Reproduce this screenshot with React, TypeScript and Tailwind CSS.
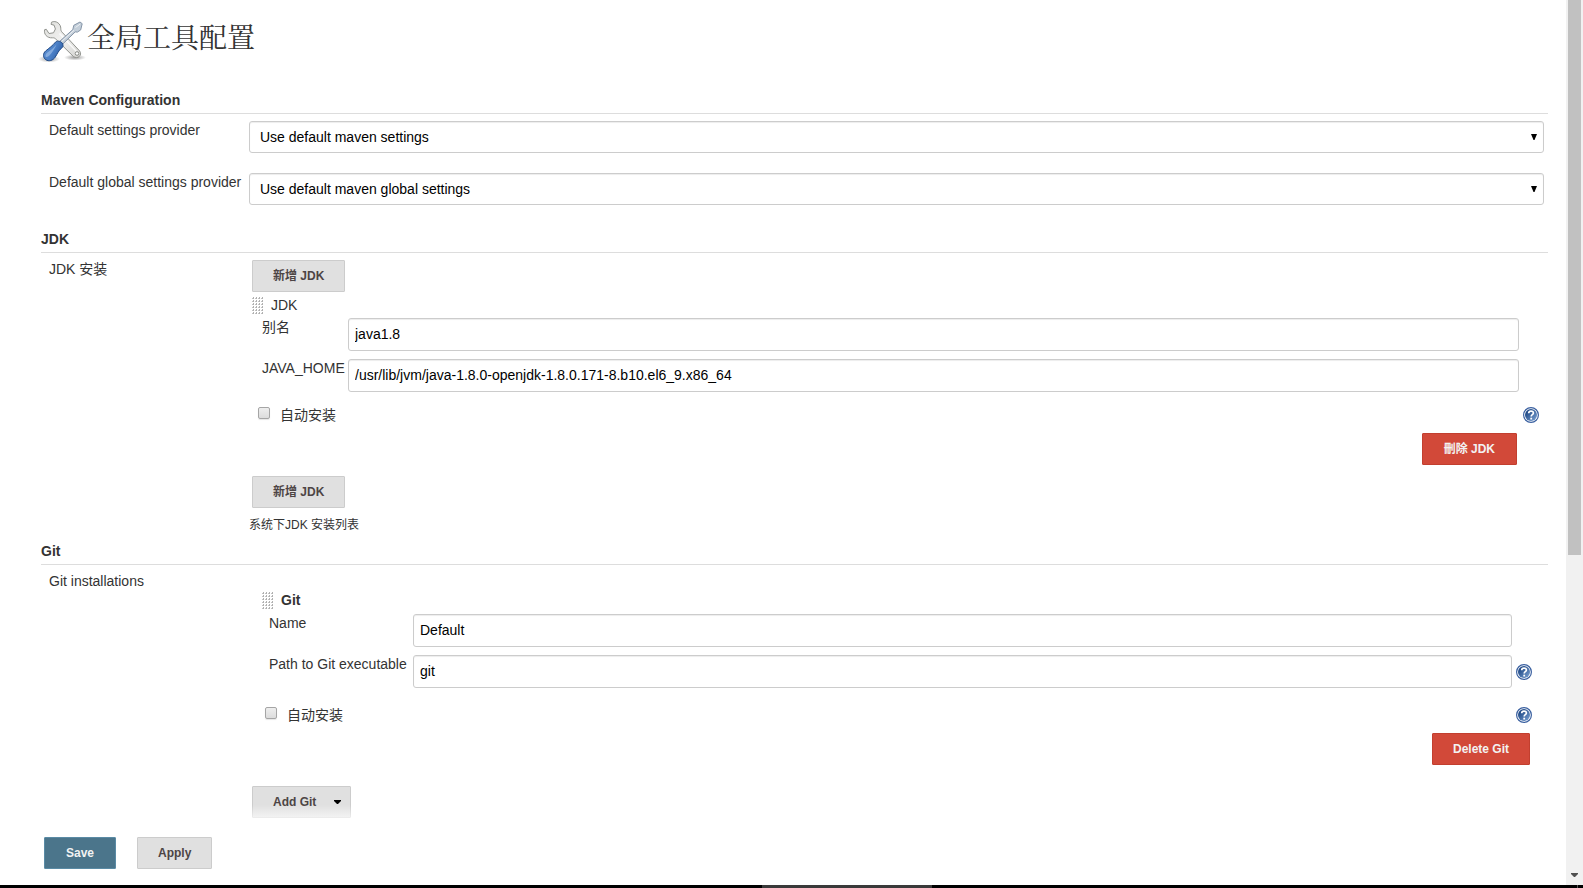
import React, { useState } from 'react';

const buttonBase = 'h-8 border rounded-[1px] text-xs font-bold whitespace-nowrap cursor-pointer';
const inputClass =
  'mt-px h-[33px] w-full min-w-0 rounded-[3px] border border-[#ccc] bg-white px-1.5 pb-0.5 text-sm text-black shadow-[inset_0_1px_1px_rgba(0,0,0,0.075)]';

const ToolsIcon: React.FC = () => (
  <svg className="w-12 h-12 shrink-0" viewBox="0 0 48 48" aria-hidden="true">
    <defs>
      <linearGradient id="steel" x1="0" y1="0" x2="1" y2="1">
        <stop offset="0" stopColor="#dcdcd9" />
        <stop offset="0.5" stopColor="#f2f2f1" />
        <stop offset="1" stopColor="#d3d3d0" />
      </linearGradient>
      <linearGradient id="handle" x1="0" y1="0.3" x2="1" y2="0.8">
        <stop offset="0" stopColor="#5d8fd0" />
        <stop offset="0.5" stopColor="#4a7fc6" />
        <stop offset="1" stopColor="#2a569a" />
      </linearGradient>
      <radialGradient id="shade">
        <stop offset="0" stopColor="#000" stopOpacity="0.4" />
        <stop offset="1" stopColor="#000" stopOpacity="0" />
      </radialGradient>
    </defs>
    <ellipse cx="11" cy="43" rx="11" ry="3.5" fill="url(#shade)" />
    <ellipse cx="37" cy="41.5" rx="11" ry="3" fill="url(#shade)" />
    <path
      d="M13.500 6.200C18 4 23 7.800 22.800 12.800c0 1.300.3 2.300 1.200 3.300l17.500 18.700c3.400 4.200-1.800 9-6.200 5.600L17.500 22.800c-1-.9-1.800-1.100-3-1C9 22.300 5.500 18 6.700 13.600l1.600-.3 2.700 4.200 4.500-.7 1.900-3.800-1.300-3.800-3-.8z"
      fill="url(#steel)"
      stroke="#92948f"
      strokeLinejoin="round"
    />
    <path d="M21.500 17.500l17 18" stroke="#fff" strokeWidth="1.500" opacity="0.8" />
    <circle cx="39" cy="37.500" r="1.800" fill="#fff" stroke="#888a85" />
    <path
      d="M21.500 25.500L34.800 13.600l1-4.300 6.200-3.300 2.200 1.700-1.500 6.200-3.300 2.200-2.200-.2L24.800 28z"
      fill="#c3ced9"
      stroke="#8595a8"
      strokeLinejoin="round"
    />
    <path d="M23.500 25.500l12.500-11.200M37.500 11.500l4.500-3.300" fill="none" stroke="#edf1f5" strokeWidth="1" />
    <path
      d="M17.800 25.800c2.300-1.500 5.800-.3 6.900 2.100.8 1.900.1 3.200-1.200 4.300-3 2.500-4.200 5.600-6.200 8.800-2.300 3.700-6.600 4.700-9.500 2.700-3-2.100-3.100-6.200-.2-8.700 3.500-2.800 7.100-5.400 10.200-9.200z"
      fill="url(#handle)"
      stroke="#204a87"
    />
    <path d="M18.500 28.500c-3 3.600-6.400 6-9.300 8.300-1.700 1.500-1.900 2.900-1.400 4.200 2.500.8 4.700-2.500 6.800-5.500 1.300-2 2.800-4.200 3.900-7z" fill="#a9c6ec" opacity="0.600" />
  </svg>
);

const HelpButton: React.FC<{ className?: string }> = ({ className = '' }) => (
  <button type="button" aria-label="Help" className={`block w-4 h-4 cursor-pointer ${className}`}>
    <svg viewBox="0 0 16 16" className="w-4 h-4">
      <defs>
        <linearGradient id="helpFill" x1="0" y1="0" x2="1" y2="1">
          <stop offset="0.2" stopColor="#204a87" />
          <stop offset="1" stopColor="#7fa5d6" />
        </linearGradient>
      </defs>
      <circle cx="8" cy="8" r="7.400" fill="#fff" stroke="#3a60a0" strokeWidth="1.200" />
      <circle cx="8" cy="8" r="6" fill="url(#helpFill)" />
      <path d="M5.700 6.300c0-3 4.700-2.900 4.700-.3 0 1.700-2.200 1.700-2.200 3.500" fill="none" stroke="#fff" strokeWidth="1.700" />
      <rect x="7.300" y="10.700" width="1.800" height="1.800" fill="#fff" />
    </svg>
  </button>
);

const Grip: React.FC = () => (
  <svg className="w-[11px] h-[17px] cursor-move" viewBox="0 0 11 17" aria-hidden="true">
    {[0, 3, 6, 9, 12, 15].map((y) =>
      [0, 3, 6, 9].map((x) => (
        <g key={`${x}-${y}`}>
          <rect x={x + 1} y={y} width="1" height="2" fill="#b0b0b0" />
          <rect x={x} y={y + 1} width="1" height="1" fill="#c4c4c4" />
        </g>
      ))
    )}
  </svg>
);

const Section: React.FC<{ title: string; children: React.ReactNode }> = ({ title, children }) => (
  <section className="ml-[3px]">
    <h2 className="border-b border-[#ddd] pb-[3px] font-bold">{title}</h2>
    <div className="pt-1.5 pr-1">{children}</div>
  </section>
);

const SettingsSelect: React.FC<{ id: string; label: string; option: string }> = ({ id, label, option }) => (
  <>
    <label htmlFor={id} className="pl-2 whitespace-nowrap">{label}</label>
    <div className="relative mt-px">
      <select
        id={id}
        className="block h-8 w-full appearance-none rounded-[3px] border border-[#ccc] bg-white px-2.5 text-sm text-black shadow-[inset_0_1px_1px_rgba(0,0,0,0.075)]"
      >
        <option>{option}</option>
      </select>
      <svg className="pointer-events-none absolute right-[7px] top-[13px] w-1.5 h-1.5" viewBox="0 0 6 6">
        <path d="M0 0h6L3.500 6h-1z" fill="#000" />
      </svg>
    </div>
  </>
);

const AutoInstall: React.FC<{ id: string }> = ({ id }) => {
  const [checked, setChecked] = useState(false);
  return (
    <div className="flex items-start">
      <input
        id={id}
        type="checkbox"
        checked={checked}
        onChange={(e) => setChecked(e.target.checked)}
        className="mt-0.5 mr-2.5 w-3 h-3 appearance-none rounded-[2px] border border-[#a5a5a5] bg-linear-to-b from-[#eee] to-[#dcdcdc] shadow-[0_1px_1px_rgba(0,0,0,0.1)] checked:bg-gray-600"
      />
      <label htmlFor={id} className="grow">自动安装</label>
      <HelpButton className="mt-0.5" />
    </div>
  );
};

const AddJdkButton: React.FC = () => (
  <button type="button" className={`${buttonBase} ml-[3px] block px-5 border-[#ccc] bg-[#e0e0e0] text-[#4d4545]`}>
    新增 JDK
  </button>
);

const App: React.FC = () => {
  return (
    <div className="flex h-screen flex-col overflow-hidden bg-white font-['Liberation_Sans','Noto_Sans_CJK_SC',sans-serif] text-sm leading-5 text-[#333]">
      <div className="flex min-h-0 grow">
        <div className="relative min-w-0 grow overflow-hidden">
          <main className="pt-4 pr-[18px] pl-[38px]">
            <header className="mb-[26px] flex h-12 gap-px">
              <ToolsIcon />
              <h1 className="font-['Liberation_Serif','Noto_Serif_CJK_SC','Noto_Sans_CJK_SC',serif] text-[28px] leading-[46px]">
                全局工具配置
              </h1>
            </header>

            <form id="config" onSubmit={(e) => e.preventDefault()}>
              <Section title="Maven Configuration">
                <div className="mb-6 grid grid-cols-[208px_1fr] gap-y-[19px]">
                  <SettingsSelect id="settings" label="Default settings provider" option="Use default maven settings" />
                  <SettingsSelect
                    id="globalSettings"
                    label="Default global settings provider"
                    option="Use default maven global settings"
                  />
                </div>
              </Section>

              <Section title="JDK">
                <div className="mb-1.5 grid grid-cols-[208px_1fr]">
                  <div className="pl-2">JDK 安装</div>
                  <div className="pt-px">
                    <AddJdkButton />
                    <div className="mt-[3px] ml-[3px] flex items-center gap-2">
                      <Grip />
                      <span>JDK</span>
                    </div>
                    <div className="mt-0.5 mr-[25px] ml-[13px] grid grid-cols-[86px_1fr] gap-y-[7px]">
                      <label htmlFor="jdkName">别名</label>
                      <input id="jdkName" type="text" defaultValue="java1.8" className={inputClass} />
                      <label htmlFor="javaHome">JAVA_HOME</label>
                      <input
                        id="javaHome"
                        type="text"
                        defaultValue="/usr/lib/jvm/java-1.8.0-openjdk-1.8.0.171-8.b10.el6_9.x86_64"
                        className={inputClass}
                      />
                    </div>
                    <div className="mt-[13px] mr-[5px] ml-[9px]">
                      <AutoInstall id="jdkAuto" />
                    </div>
                    <div className="mt-2 mr-[27px] mb-[11px] flex justify-end">
                      <button type="button" className={`${buttonBase} px-[21px] border-[#c23f2f] bg-[#d24939] text-[#f2f2f2]`}>
                        刪除 JDK
                      </button>
                    </div>
                    <AddJdkButton />
                    <p className="mt-[7px] text-xs leading-5">系统下JDK 安装列表</p>
                  </div>
                </div>
              </Section>

              <Section title="Git">
                <div className="grid grid-cols-[208px_1fr]">
                  <div className="pl-2">Git installations</div>
                  <div className="pt-[19px]">
                    <div className="ml-[13px] flex items-center gap-2">
                      <Grip />
                      <b>Git</b>
                    </div>
                    <div className="mt-[3px] mr-3 ml-5 grid grid-cols-[144px_1fr_20px] gap-y-[7px]">
                      <label htmlFor="gitName">Name</label>
                      <input id="gitName" type="text" defaultValue="Default" className={inputClass} />
                      <span />
                      <label htmlFor="gitPath">Path to Git executable</label>
                      <input id="gitPath" type="text" defaultValue="git" className={inputClass} />
                      <HelpButton className="mt-2.5 ml-1" />
                    </div>
                    <div className="mt-[17px] mr-3 ml-4">
                      <AutoInstall id="gitAuto" />
                    </div>
                    <div className="mt-2 mr-3.5 mb-[21px] flex justify-end">
                      <button type="button" className={`${buttonBase} px-5 border-[#c23f2f] bg-[#d24939] text-[#f2f2f2]`}>
                        Delete Git
                      </button>
                    </div>
                    <button
                      type="button"
                      className={`${buttonBase} ml-[3px] flex items-center gap-[18px] border-[#ccc] bg-[#e0e0e0] pr-[9px] pl-5 text-[#4d4545]`}
                    >
                      Add Git
                      <svg className="w-[7px] h-1" viewBox="0 0 7 4">
                        <path d="M0 0h7v1L4 4H3L0 1z" fill="#000" />
                      </svg>
                    </button>
                  </div>
                </div>
              </Section>
            </form>
          </main>

          {/* sticky save bar, fades out the form underneath */}
          <div className="absolute inset-x-0 bottom-0">
            <div className="h-5 bg-linear-to-b from-transparent to-white" />
            <div className="flex gap-[21px] bg-white pt-3 pb-4 pl-11">
              <button type="submit" form="config" className={`${buttonBase} px-[21px] border-[#5a8ba5] bg-[#4b758b] text-[#f2f2f2]`}>
                Save
              </button>
              <button type="button" className={`${buttonBase} px-5 border-[#ccc] bg-[#e0e0e0] text-[#4d4545]`}>
                Apply
              </button>
            </div>
          </div>
        </div>

        {/* scrollbar */}
        <div className="flex w-[17px] shrink-0 flex-col items-center justify-between bg-[#f1f1f1] pb-2">
          <div className="h-[555px] w-[13px] bg-[#c1c1c1]" />
          <svg className="w-[7px] h-1" viewBox="0 0 7 4">
            <path d="M0 0h7v1L4 4H3L0 1z" fill="#505050" />
          </svg>
        </div>
      </div>

      {/* top edge of the taskbar */}
      <div className="flex h-[3px] shrink-0 justify-between bg-black pr-[5px] pl-[762px]">
        <div className="w-[170px] bg-[#3a3a3a]" />
        <div className="w-px bg-[#555]" />
      </div>
    </div>
  );
};

export default App;
